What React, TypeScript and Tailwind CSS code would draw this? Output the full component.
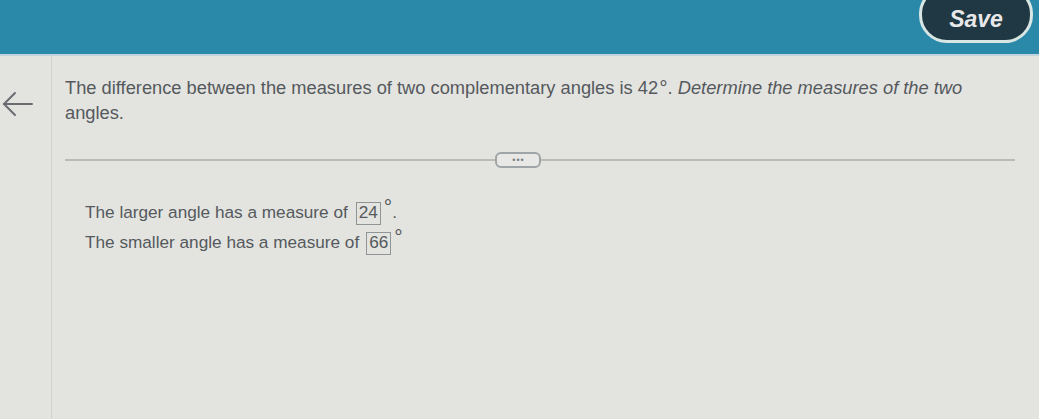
import React from "react";

export default function App() {
  return (
    <div className="w-[1039px] h-[419px] overflow-hidden bg-[#e3e4e0] flex flex-col" style={{ fontFamily: '"Liberation Sans", Arial, sans-serif' }}>
      <header className="h-[56px] bg-[#2a88a8] flex items-start justify-end pr-[6px] shrink-0 border-b-2 border-[#bfd4dc]">
        <button className="mt-[-14px] w-[114px] h-[57px] rounded-[28px] bg-[#1f3843] border-[3px] border-[#d8e6e4] flex items-center justify-center pt-[10px]">
          <span className="text-[#e8e8ea] text-[23px] font-bold italic leading-none">Save</span>
        </button>
      </header>
      <div className="flex flex-1">
        <div className="w-[52px] shrink-0 border-r border-[#d2d3cf] flex flex-col items-start pl-[2px] pt-[35px]">
          <svg width="32" height="26" viewBox="0 0 32 26" fill="none" stroke="#6a6d70" strokeWidth="2" strokeLinecap="round">
            <path d="M30 13H2" />
            <path d="M13 2L2 13l11 11" />
          </svg>
        </div>
        <div className="flex-1 pl-[13px] pr-[24px] pt-[19px]">
          <p className="text-[18.3px] leading-[25px] text-[#55595d] w-[930px]">
            The difference between the measures of two complementary angles is 42<span className="relative top-[1px] text-[21px] leading-none ml-[1px]">°</span>.{" "}<span className="italic">Determine the measures of the two</span> angles.
          </p>
          <div className="mt-[27px] flex items-center">
            <div className="flex-1 h-[2px] bg-[#b9bcb9]" />
            <div className="w-[46px] h-[16px] rounded-[6px] border-2 border-[#9fa4a6] bg-[#e8e9e6] flex items-center justify-center text-[#7a7f82] text-[9px] leading-none tracking-[1px]">•••</div>
            <div className="flex-[1.1] h-[2px] bg-[#b9bcb9]" />
          </div>
          <div className="mt-[31px] pl-[20px] text-[17.2px] text-[#55595d] flex flex-col gap-[2px]">
            <div className="flex items-center h-[28px]">
              <span>The larger angle has a measure of</span>
              <span className="ml-[8px] w-[25px] h-[23px] border border-[#8f9496] flex items-center justify-center">24</span>
              <span className="self-start text-[21px] leading-none ml-[3px] -mt-[3px]">°</span>
              <span>.</span>
            </div>
            <div className="flex items-center h-[28px]">
              <span>The smaller angle has a measure of</span>
              <span className="ml-[7px] w-[25px] h-[23px] border border-[#8f9496] flex items-center justify-center">66</span>
              <span className="self-start text-[21px] leading-none ml-[3px] -mt-[3px]">°</span>
            </div>
          </div>
        </div>
      </div>
    </div>
  );
}
